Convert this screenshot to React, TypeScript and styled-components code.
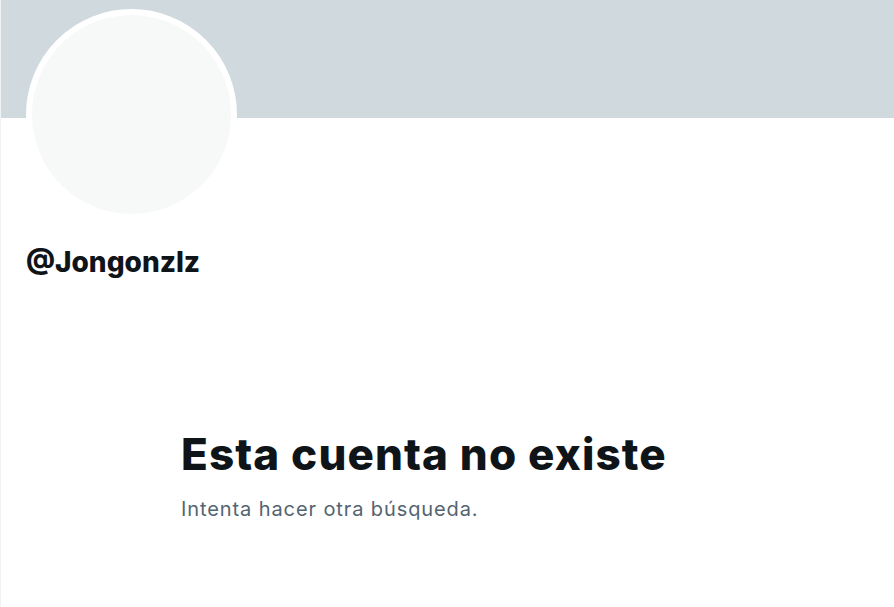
import React from "react";
import styled, { createGlobalStyle } from "styled-components";

const Global = createGlobalStyle`
  html, body { margin: 0; padding: 0; background: #ffffff; }
  body { font-family: Inter, "Noto Sans", sans-serif; color: #0f1419; }
`;

const Page = styled.main`
  min-height: 607px;
  border-left: 1px solid #eff3f4;
  box-sizing: border-box;
  display: flex;
  flex-direction: column;
`;

const Banner = styled.div`
  height: 118px;
  background: #cfd9de;
`;

const ProfileHead = styled.section`
  padding: 0 0 0 25px;
  display: flex;
  flex-direction: column;
`;

const Avatar = styled.div`
  width: 211px;
  height: 211px;
  margin-top: -109px;
  box-sizing: border-box;
  border-radius: 50%;
  border: 6px solid #ffffff;
  background: #f7f9f9;
`;

const Handle = styled.h2`
  margin: 24px 0 0;
  font-size: 28px;
  line-height: 36px;
  font-weight: 800;
  letter-spacing: 0;
  color: #0f1419;
`;

const Empty = styled.section`
  padding: 148px 0 0 180px;
  display: flex;
  flex-direction: column;
  gap: 17px;
`;

const Title = styled.h1`
  margin: 0;
  font-size: 44px;
  line-height: 52px;
  font-weight: 800;
  letter-spacing: 1.1px;
  color: #0f1419;
`;

const Hint = styled.p`
  margin: 0;
  font-size: 20px;
  line-height: 24px;
  font-weight: 400;
  letter-spacing: 0.9px;
  color: #536471;
`;

export default function App() {
  return (
    <>
      <Global />
      <Page>
        <Banner />
        <ProfileHead>
          <Avatar />
          <Handle>@Jongonzlz</Handle>
        </ProfileHead>
        <Empty>
          <Title>Esta cuenta no existe</Title>
          <Hint>Intenta hacer otra búsqueda.</Hint>
        </Empty>
      </Page>
    </>
  );
}
